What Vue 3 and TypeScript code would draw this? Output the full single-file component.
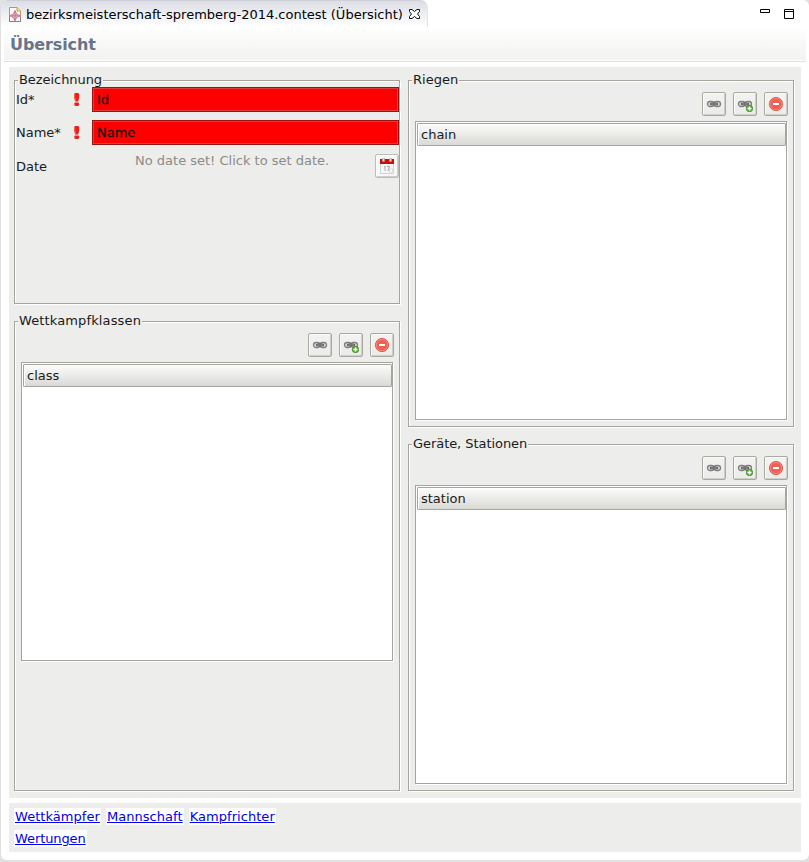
<script setup lang="ts">
interface ListGroup {
  title: string
  column: string
  area: string
}

interface TextRow {
  label: string
  value: string
}

const textRows: TextRow[] = [
  { label: 'Id*', value: 'Id' },
  { label: 'Name*', value: 'Name' },
]

const listGroups: ListGroup[] = [
  { title: 'Wettkampfklassen', column: 'class', area: 'classes' },
  { title: 'Riegen', column: 'chain', area: 'chains' },
  { title: 'Geräte, Stationen', column: 'station', area: 'stations' },
]

const linkRows: string[][] = [['Wettkämpfer', 'Mannschaft', 'Kampfrichter'], ['Wertungen']]
const actions = ['link', 'add', 'remove'] as const
</script>

<template>
  <div class="window">
    <header class="tabbar">
      <div class="tab">
        <svg class="file" width="12" height="15" viewBox="0 0 12 15">
          <path d="M.5.5H8L11.5 4v10.500H.5z" fill="#fdf8f0" stroke="#b99a4c" />
          <path d="M8 .5V4h3.500" fill="#ecd9a0" stroke="#c3a45a" />
          <path d="M.5 10v4.500h11V10" fill="none" stroke="#8a7a9a" />
          <path d="M6 3.500 7.600 7.200 11.500 8.800 7.600 10.400 6 14 4.400 10.400.6 8.800 4.400 7.200z" fill="#efc3d8" stroke="#bb6c96" stroke-width=".9" />
          <path d="M6 5v7.500M2.500 8.800h7" stroke="#b85f8c" stroke-width=".8" />
        </svg>
        <span class="tab-title">bezirksmeisterschaft-spremberg-2014.contest (Übersicht)</span>
        <svg class="close" width="11" height="10" viewBox="0 0 11 10">
          <path d="M.5.5h2.500L5.500 2.500 8 .5h2.500v2L8.500 5l2 2.500v2H8L5.500 7.500 3 9.500H.5v-2l2-2.500-2-2.500z" fill="#fff" stroke="#111" />
        </svg>
      </div>
      <div class="controls">
        <svg width="10" height="4" viewBox="0 0 10 4"><path d="M.5.5h9v3h-9z" fill="#fff" stroke="#000" /></svg>
        <svg width="10" height="10" viewBox="0 0 10 10"><path d="M.5.5h9v9h-9zM.5 2.500h9" fill="#fff" stroke="#000" /></svg>
      </div>
    </header>
    <div class="heading"><h1>Übersicht</h1></div>

    <main class="body">
      <section class="group naming">
        <h2 class="legend">Bezeichnung</h2>
        <div class="form">
          <div v-for="row in textRows" :key="row.label" class="row">
            <span class="label">{{ row.label }}</span>
            <svg class="bang" width="6" height="13" viewBox="0 0 6 13">
              <path d="M1.200 0h3l1 1v3.200l-1 4.300h-3L0 4.200V1z" fill="#f01c1c" />
              <path d="M.7 1v3l.9 3.800" fill="none" stroke="#f58a42" stroke-width=".8" />
              <rect x=".2" y="9.600" width="5" height="3.400" rx="1.400" fill="#f01c1c" />
              <path d="M.7 11v1" stroke="#f58a42" stroke-width=".8" />
            </svg>
            <div class="field">{{ row.value }}</div>
          </div>
          <div class="row date">
            <span class="label">Date</span>
            <span class="hint">No date set! Click to set date.</span>
            <button class="tool" type="button">
              <svg width="14" height="16" viewBox="0 0 14 16">
                <rect x="0" y="4" width="14" height="12" fill="#f6f6f6" />
                <path d="M.5 5v10.500h13V5" fill="none" stroke="#d2d2d2" />
                <rect x="0" y="1" width="14" height="5" fill="#cf0c0c" />
                <path d="M2.500 0h2v3.500h-2zM9.500 0h2v3.500h-2z" fill="#f3dede" stroke="#a89090" stroke-width=".5" />
                <path d="M4 9l1-.7V13M7 8.500h2.500L8 13" fill="none" stroke="#a6a6a6" />
                <path d="M9.500 11h3v3h-3z" fill="#fff" stroke="#d0d0d0" stroke-width=".7" />
              </svg>
            </button>
          </div>
        </div>
      </section>

      <section v-for="group in listGroups" :key="group.title" class="group" :class="group.area">
        <h2 class="legend">{{ group.title }}</h2>
        <div class="tools">
          <button v-for="action in actions" :key="action" class="tool" type="button">
            <svg v-if="action !== 'remove'" width="16" height="16" viewBox="0 0 16 16">
              <rect x="1.500" y="5.500" width="6.500" height="5" rx="2.500" fill="#d8d8d8" stroke="#808080" stroke-width="1.300" />
              <rect x="8" y="5.500" width="6.500" height="5" rx="2.500" fill="#d8d8d8" stroke="#808080" stroke-width="1.300" />
              <path d="M4.500 7.200h7v1.600h-7z" fill="#d4d4d4" stroke="#484848" stroke-width=".9" />
              <g v-if="action === 'add'">
                <circle cx="12.500" cy="12.500" r="3.200" fill="#5fb336" stroke="#3d8524" stroke-width=".8" />
                <path d="M12.500 10.500v4M10.500 12.500h4" stroke="#fff" stroke-width="1.400" />
              </g>
            </svg>
            <svg v-else width="16" height="16" viewBox="0 0 16 16">
              <circle cx="8" cy="8" r="6.600" fill="#ee5f54" stroke="#dc5148" stroke-width=".9" />
              <circle cx="8" cy="8" r="5.700" fill="none" stroke="#f69a8f" stroke-width=".7" />
              <rect x="5" y="7" width="6" height="2" fill="#fff" />
            </svg>
          </button>
        </div>
        <div class="list"><div class="column">{{ group.column }}</div></div>
      </section>
    </main>

    <nav class="links">
      <div v-for="(links, index) in linkRows" :key="index" class="link-row">
        <a v-for="link in links" :key="link" href="#">{{ link }}</a>
      </div>
    </nav>
  </div>
</template>

<style>
body {
  margin: 0;
  background: #e1e1e1;
}
</style>

<style scoped>
.window {
  box-sizing: border-box;
  width: 809px;
  height: 860px;
  border-left: 1px solid #dfdfdf;
  border-radius: 6px;
  background: #fff;
  overflow: hidden;
  font: 13px/16px "DejaVu Sans", sans-serif;
  color: #1a1a1a;
}
.tabbar {
  display: flex;
  justify-content: space-between;
  height: 27px;
}
.tab {
  box-sizing: border-box;
  display: flex;
  width: 427px;
  padding: 6px 0 0 8px;
  border-top: 1px solid #ced1da;
  border-right: 1px solid #e2e3e9;
  border-radius: 6px 8px 0 0;
  background: linear-gradient(#dcdee5, #fff);
}
.tab-title {
  width: 377px;
  margin-left: 5px;
  white-space: nowrap;
  color: #000;
}
.close {
  margin: 2px 0 0 6px;
}
.controls {
  display: flex;
  gap: 14px;
  padding: 9px 15px 0 0;
}
.heading {
  box-sizing: border-box;
  height: 35px;
  margin: 0 3px;
  padding: 8px 0 0 6px;
  border-bottom: 1px solid #dfdfdf;
  background: linear-gradient(#fff, #f2f2f1 33px, #fff 33px);
}
h1 {
  margin: 0;
  font-size: 16px;
  line-height: 20px;
  letter-spacing: -0.1px;
  color: #67758b;
}
.body {
  box-sizing: border-box;
  display: grid;
  grid-template:
    "naming chains" 224px
    "gap chains" 17px
    "classes chains" 106px
    "classes gap2" 17px
    "classes stations" 347px / 386px 386px;
  column-gap: 8px;
  height: 731px;
  margin: 5px 8px 0;
  padding: 13px 5px 0;
  background: #ededeb;
}
.group {
  box-sizing: border-box;
  position: relative;
  border: 1px solid #a5a59d;
  box-shadow: 1px 1px #fff, inset 1px 1px #fff;
}
.naming { grid-area: naming; }
.classes { grid-area: classes; }
.chains { grid-area: chains; }
.stations { grid-area: stations; }
.legend {
  position: absolute;
  top: -9px;
  left: 3px;
  margin: 0;
  padding: 0 1px;
  background: #ededeb;
  font-size: 13px;
  font-weight: 400;
  line-height: 16px;
  white-space: nowrap;
}
.naming .legend,
.stations .legend {
  letter-spacing: -0.06px;
}
.classes .legend {
  letter-spacing: 0.13px;
}
.form {
  position: relative;
  display: flex;
  flex-direction: column;
  gap: 8px;
  padding: 6px 0 0 1px;
}
.row {
  display: flex;
  align-items: center;
  height: 25px;
}
.label {
  width: 58px;
}
.bang {
  margin-right: 12px;
}
.field {
  box-sizing: border-box;
  width: 307px;
  height: 25px;
  padding: 4px 4px 3px;
  border: 1px solid #971414;
  box-shadow: inset 0 0 0 1px #df3c3c;
  background: #f00;
  -webkit-text-stroke: 0.3px #1a1a1a;
}
.row.date {
  height: 26px;
}
.date .label {
  padding-top: 2px;
}
.hint {
  flex: 1;
  margin: -10px 0 0 61px;
  color: #8b8b89;
}
.tool {
  box-sizing: border-box;
  display: flex;
  align-items: center;
  justify-content: center;
  width: 24px;
  height: 24px;
  padding: 0;
  border: 1px solid #a9a9a0;
  border-radius: 2px;
  background: linear-gradient(#f3f3f2, #ebebe9);
  box-shadow: inset 1px 1px #fafafa, inset -1px -1px #cfcfc9;
}
.date .tool {
  border-color: #bdbdb8;
  background: #f8f8f8;
}
.tools {
  display: flex;
  justify-content: flex-end;
  gap: 7px;
  padding: 11px 5px 5px 0;
}
.list {
  box-sizing: border-box;
  height: 299px;
  margin: 0 6px;
  padding: 1px 0 0 1px;
  border: 1px solid #a5a59d;
  background: #fff;
  box-shadow: 1px 1px #fff;
}
.column {
  box-sizing: border-box;
  height: 23px;
  padding: 3px 3px 2px;
  border: 1px solid #a5a59d;
  border-radius: 1px;
  background: linear-gradient(#fcfcfb, #d9d9d5);
  box-shadow: inset 1px 1px #fff;
}
.links {
  box-sizing: border-box;
  display: flex;
  flex-direction: column;
  gap: 5px;
  height: 49px;
  margin: 5px 8px 0;
  padding: 5px 5px 0;
  background: #ededeb;
}
.link-row {
  display: flex;
  gap: 5px;
  letter-spacing: 0.05px;
}
.link-row:last-child {
  letter-spacing: -0.1px;
}
.links a {
  padding: 0 1px;
  background: #fff;
  color: #0000ee;
  line-height: 17px;
}
</style>
